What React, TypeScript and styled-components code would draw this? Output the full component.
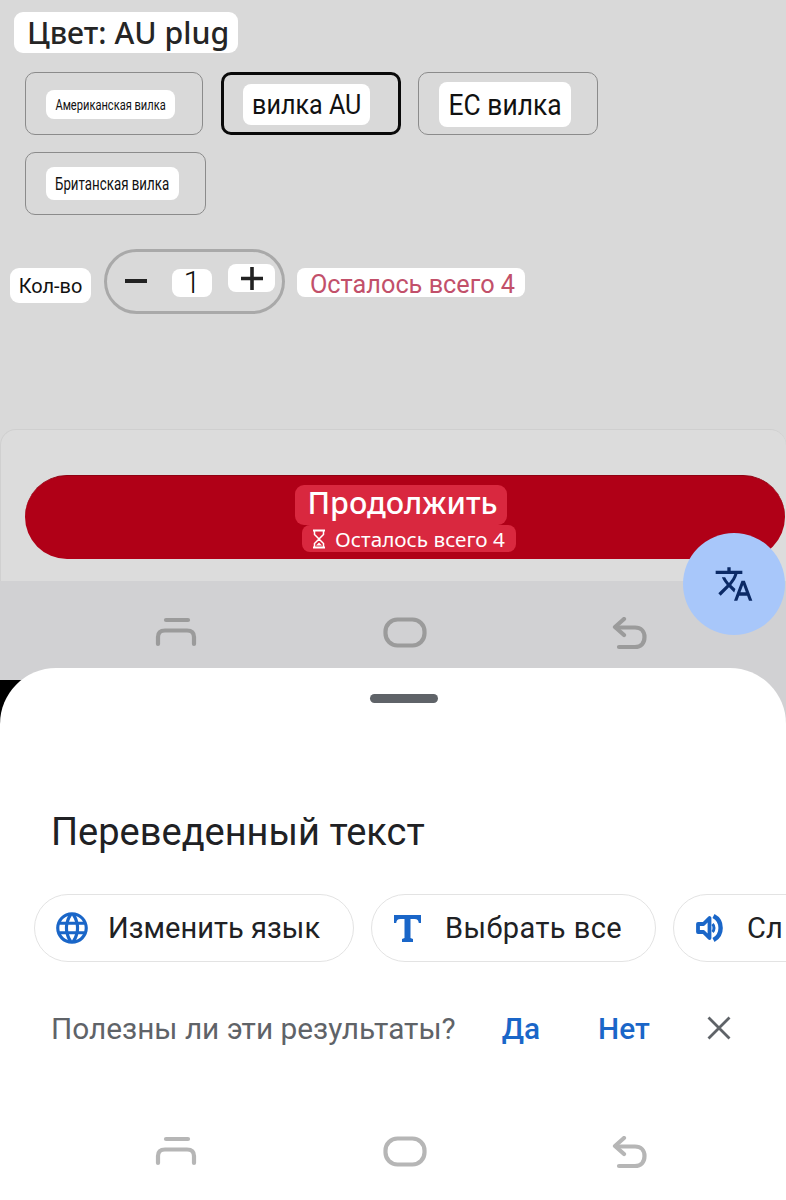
import styled, { createGlobalStyle } from 'styled-components';

const GlobalStyle = createGlobalStyle`
	html, body {
		margin: 0;
		padding: 0;
		background: #ffffff;
	}
	body {
		font-family: 'Roboto', 'Liberation Sans', sans-serif;
	}
`;

const Page = styled.div`
	position: relative;
	display: flex;
	flex-direction: column;
	width: 786px;
	height: 1200px;
	overflow: hidden;
	background: #ffffff;
`;

const Content = styled.section`
	display: flex;
	flex-direction: column;
	height: 429px;
	box-sizing: border-box;
	padding-top: 12px;
	background: #d9d9d9;
`;

const TitleChip = styled.h2`
	align-self: flex-start;
	margin: 0 0 19px 14px;
	padding: 0 9px 0 13px;
	height: 41px;
	line-height: 41px;
	background: #fff;
	border-radius: 9px;
	font-family: 'Noto Sans', sans-serif;
	font-size: 30.3px;
	font-weight: 500;
	color: #252525;
	white-space: nowrap;
`;

const Options = styled.div`
	display: flex;
	flex-wrap: wrap;
	gap: 17px;
	width: 600px;
	margin-left: 25px;
`;

const Option = styled.div<{ $w: number; $selected?: boolean }>`
	display: flex;
	align-items: center;
	justify-content: flex-start;
	box-sizing: border-box;
	width: ${p => p.$w}px;
	height: 63px;
	margin-left: ${p => (p.$selected ? 1 : 0)}px;
	padding-left: ${p => (p.$selected ? 19 : 20)}px;
	border: ${p => (p.$selected ? '3px solid #0a0a0a' : '1px solid #8b8b8b')};
	border-radius: 10px;
`;

const OptionChip = styled.span<{ $size: number; $h: number; $w: number; $top?: number }>`
	display: flex;
	align-items: center;
	justify-content: center;
	box-sizing: border-box;
	width: ${p => p.$w}px;
	height: ${p => p.$h}px;
	margin-top: ${p => p.$top ?? 0}px;
	background: #fff;
	border-radius: 8px;
	font-size: ${p => p.$size}px;
	color: #111;
	white-space: nowrap;
`;

const Squeezed = styled.span<{ $x: number }>`
	display: inline-block;
	transform: scaleX(${p => p.$x});
`;

const QtyRow = styled.div`
	display: flex;
	align-items: center;
	margin: 34px 0 0 10px;
`;

const QtyLabel = styled.span`
	display: flex;
	align-items: center;
	justify-content: center;
	width: 81px;
	height: 35px;
	margin-top: 8px;
	background: #fff;
	border-radius: 9px;
	font-size: 21px;
	color: #111;
`;

const Stepper = styled.div`
	display: flex;
	align-items: center;
	box-sizing: border-box;
	width: 181px;
	height: 65px;
	margin-left: 13px;
	padding-left: 18px;
	border: 3px solid #a9a9a9;
	border-radius: 33px;
`;

const MinusBar = styled.span`
	display: block;
	width: 22px;
	height: 4px;
	margin-top: -1px;
	background: #222;
`;

const CountChip = styled.span`
	display: flex;
	align-items: center;
	justify-content: center;
	width: 40px;
	height: 28px;
	margin: 2px 0 0 25px;
	background: #fff;
	border-radius: 8px;
	font-size: 31px;
	font-weight: 300;
	color: #111;
`;

const PlusChip = styled.span`
	display: flex;
	align-items: center;
	justify-content: center;
	width: 47px;
	height: 28px;
	margin: -7px 0 0 16px;
	background: #fff;
	border-radius: 8px;
`;

const StockChip = styled.span`
	display: flex;
	align-items: center;
	justify-content: center;
	box-sizing: border-box;
	width: 228px;
	height: 29px;
	margin: 2px 0 0 12px;
	padding: 3px 0 0 3px;
	background: #fff;
	border-radius: 8px;
	font-size: 25.3px;
	color: #c2506a;
	white-space: nowrap;
`;

const BuyWrap = styled.div`
	background: #d9d9d9;
`;

const BuyCard = styled.section`
	display: flex;
	box-sizing: border-box;
	height: 152px;
	padding: 45px 1px 0 25px;
	background: #dcdcdc;
	border-top: 1px solid #cfcfcf;
	border-left: 1px solid #d0d0d0;
	border-radius: 16px 16px 0 0;
`;

const BuyButton = styled.div`
	display: flex;
	flex-direction: column;
	align-items: center;
	box-sizing: border-box;
	width: 760px;
	height: 84px;
	margin-left: -1px;
	padding-top: 9px;
	background: #b00017;
	border-top: 1px solid #8f0012;
	border-radius: 42px;
`;

const BuyTitle = styled.span`
	display: flex;
	align-items: center;
	justify-content: center;
	box-sizing: border-box;
	width: 212px;
	height: 40px;
	margin-left: -9px;
	padding: 0 0 7px 4px;
	background: #d9283f;
	border-radius: 9px;
	font-family: 'Noto Sans', sans-serif;
	font-size: 30.5px;
	font-weight: 500;
	color: #fff;
`;

const BuySub = styled.span`
	display: flex;
	align-items: center;
	justify-content: center;
	gap: 9px;
	width: 214px;
	height: 27px;
	margin-left: 7px;
	background: #d9283f;
	border-radius: 8px;
	font-family: 'Noto Sans', sans-serif;
	font-size: 20.7px;
	color: #fff;
	white-space: nowrap;
`;

const NavBar = styled.nav<{ $light?: boolean }>`
	position: relative;
	display: flex;
	justify-content: space-between;
	align-items: flex-start;
	box-sizing: border-box;
	padding: ${p => (p.$light ? '0' : '36px')} 138px 0 155px;
	height: ${p => (p.$light ? '46px' : '149px')};
	background: ${p => (p.$light ? '#fff' : '#d1d1d3')};
	color: ${p => (p.$light ? '#b6b6b6' : '#9b9b9b')};
`;

const BlackCorner = styled.div`
	position: absolute;
	left: 0;
	top: 99px;
	width: 60px;
	height: 50px;
	background: #000;
`;

const Fab = styled.div`
	position: absolute;
	left: 683px;
	top: 533px;
	z-index: 3;
	display: flex;
	align-items: center;
	justify-content: center;
	width: 102px;
	height: 102px;
	border-radius: 50%;
	background: #a8c7fa;
	color: #0b2a66;
`;

const Sheet = styled.section`
	position: relative;
	z-index: 2;
	flex: 1;
	display: flex;
	flex-direction: column;
	margin-top: -62px;
	background: #fff;
	border-radius: 56px 56px 0 0;
`;

const Handle = styled.div`
	align-self: center;
	width: 68px;
	height: 9px;
	margin-top: 26px;
	margin-left: 21px;
	background: #5f6368;
	border-radius: 5px;
`;

const SheetTitle = styled.h1`
	margin: 109px 0 0 51px;
	height: 40px;
	line-height: 40px;
	font-size: 38px;
	font-weight: 400;
	color: #202124;
	white-space: nowrap;
`;

const ActionRow = styled.div`
	display: flex;
	gap: 17px;
	margin: 42px 0 0 34px;
	width: 752px;
	overflow: hidden;
`;

const ActionChip = styled.div<{ $w: number; $pad: number; $gap: number; $ls: number }>`
	flex: none;
	display: flex;
	align-items: center;
	gap: ${p => p.$gap}px;
	box-sizing: border-box;
	width: ${p => p.$w}px;
	height: 68px;
	padding-left: ${p => p.$pad}px;
	border: 1px solid #e3e3e3;
	border-radius: 34px;
	font-size: 29px;
	letter-spacing: ${p => p.$ls}px;
	color: #202124;
	white-space: nowrap;
`;

const FeedbackRow = styled.div`
	display: flex;
	align-items: center;
	height: 40px;
	margin: 46px 0 0 51px;
	font-size: 29.8px;
	color: #5f6368;
	white-space: nowrap;
`;

const FeedbackLink = styled.span<{ $left: number }>`
	margin-left: ${p => p.$left}px;
	color: #1a66c8;
	font-weight: 500;
`;

const CloseIcon = styled.svg`
	margin-left: 57px;
	color: #5f6368;
`;

const BottomSpacer = styled.div`
	height: 88px;
`;

const RecentsIcon = () => (
	<svg width="42" height="30" viewBox="0 0 42 30" fill="none" stroke="currentColor" strokeLinecap="round" strokeWidth="4.2">
		<path d="M11 3H33" />
		<path d="M3 27V20C3 15 6 13.5 10 13.5H32C36 13.5 39 15 39 20V27" />
	</svg>
);

const HomeIcon = () => (
	<svg width="44" height="31" viewBox="0 0 44 31" fill="none" stroke="currentColor" strokeWidth="4.2">
		<rect x="2.5" y="2.5" width="39" height="26" rx="12" />
	</svg>
);

const BackIcon = () => (
	<svg width="36" height="33" viewBox="0 0 36 33" fill="none" stroke="currentColor" strokeLinecap="round" strokeLinejoin="round" strokeWidth="4.2">
		<path d="M12 2L3 10L12 18" />
		<path d="M4 10.5H23C29 10.5 32.5 14.5 32.5 20C32.5 26 29 30 23 30H7" />
	</svg>
);

const NavIcons = () => (
	<>
		<RecentsIcon />
		<HomeIcon />
		<BackIcon />
	</>
);

const Hourglass = () => (
	<svg width="14" height="20" viewBox="0 0 14 20" fill="none" stroke="#fff" strokeWidth="1.5">
		<path d="M1 1.5H13M1 18.5H13" strokeWidth="2" />
		<path d="M2.5 2V5.5L7 10L2.5 14.5V18M11.5 2V5.5L7 10L11.5 14.5V18" />
		<path d="M4 16.5L7 13.5L10 16.5Z" fill="#fff" stroke="none" />
	</svg>
);

const TranslateIcon = () => (
	<svg width="40" height="40" viewBox="0 0 24 24" fill="currentColor">
		<path d="M12.87 15.07l-2.54-2.51.03-.03c1.74-1.94 2.98-4.17 3.71-6.53H17V4h-7V2H8v2H1v1.99h11.17C11.5 7.92 10.44 9.75 9 11.35 8.07 10.32 7.3 9.19 6.69 8h-2c.73 1.63 1.73 3.17 2.98 4.56l-5.09 5.02L4 19l5-5 3.11 3.11.76-2.04zM18.5 10h-2L12 22h2l1.12-3h4.75L21 22h2l-4.5-12zm-2.62 7l1.62-4.33L19.12 17h-3.24z" />
	</svg>
);

const GlobeIcon = () => (
	<svg width="38" height="38" viewBox="0 0 24 24" fill="#1a66c8">
		<path d="M11.99 2C6.47 2 2 6.48 2 12s4.47 10 9.99 10C17.52 22 22 17.52 22 12S17.52 2 11.99 2zm6.93 6h-2.95c-.32-1.25-.78-2.45-1.38-3.56 1.84.63 3.37 1.91 4.33 3.56zM12 4.04c.83 1.2 1.48 2.53 1.91 3.96h-3.82c.43-1.43 1.08-2.76 1.91-3.96zM4.26 14C4.1 13.36 4 12.69 4 12s.1-1.36.26-2h3.38c-.08.66-.14 1.32-.14 2 0 .68.06 1.34.14 2H4.26zm.82 2h2.95c.32 1.25.78 2.45 1.38 3.56-1.84-.63-3.37-1.9-4.33-3.56zm2.95-8H5.08c.96-1.66 2.49-2.93 4.33-3.56C8.81 5.55 8.35 6.75 8.03 8zM12 19.96c-.83-1.2-1.48-2.53-1.91-3.96h3.82c-.43 1.43-1.08 2.76-1.91 3.96zM14.34 14H9.66c-.09-.66-.16-1.32-.16-2 0-.68.07-1.35.16-2h4.68c.09.65.16 1.32.16 2 0 .68-.07 1.34-.16 2zm.25 5.56c.6-1.11 1.06-2.31 1.38-3.56h2.95c-.96 1.65-2.49 2.93-4.33 3.56zM16.36 14c.08-.66.14-1.32.14-2 0-.68-.06-1.34-.14-2h3.38c.16.64.26 1.31.26 2s-.1 1.36-.26 2h-3.38z" />
	</svg>
);

const SerifTIcon = () => (
	<svg width="27" height="27" viewBox="0 0 27 27" fill="#1a66c8">
		<path d="M0 0H27V8L24.8 8C24.4 5.5 23.5 4 20.5 4H16.5V23L19 24V27H8V24L10.5 23V4H6.5C3.5 4 2.6 5.5 2.2 8H0Z" />
	</svg>
);

const SpeakerIcon = () => (
	<svg width="28" height="28" viewBox="0 0 28 28" fill="none" stroke="#1a66c8">
		<path d="M2 10H7.5L13.5 4V24L7.5 18H2Z" strokeWidth="3.8" strokeLinejoin="round" />
		<path d="M17.5 2C27 7 27 21 17.5 26" strokeWidth="4.4" />
		<path d="M16.5 10C18.5 12 18.5 16 16.5 18" strokeWidth="3" />
	</svg>
);

export default function App() {
	return (
		<Page>
			<GlobalStyle />
			<Content>
				<TitleChip>Цвет: AU plug</TitleChip>
				<Options>
					<Option $w={178}>
						<OptionChip $w={129} $h={29} $size={15} $top={2}>
							<Squeezed $x={0.74}>Американская вилка</Squeezed>
						</OptionChip>
					</Option>
					<Option $w={180} $selected>
						<OptionChip $w={127} $h={41} $size={27} $top={2}>
							<Squeezed $x={0.93}>вилка AU</Squeezed>
						</OptionChip>
					</Option>
					<Option $w={180}>
						<OptionChip $w={132} $h={45} $size={29} $top={2}>
							<Squeezed $x={0.91}>ЕС вилка</Squeezed>
						</OptionChip>
					</Option>
					<Option $w={181}>
						<OptionChip $w={133} $h={33} $size={17.5}>
							<Squeezed $x={0.76}>Британская вилка</Squeezed>
						</OptionChip>
					</Option>
				</Options>
				<QtyRow>
					<QtyLabel>
						<Squeezed $x={0.95}>Кол-во</Squeezed>
					</QtyLabel>
					<Stepper>
						<MinusBar />
						<CountChip>1</CountChip>
						<PlusChip>
							<svg width="22" height="23" viewBox="0 0 22 23" stroke="#222" strokeWidth="3.6">
								<path d="M0 11.5H22M11 0V23" />
							</svg>
						</PlusChip>
					</Stepper>
					<StockChip>Осталось всего 4</StockChip>
				</QtyRow>
			</Content>
			<BuyWrap>
				<BuyCard>
					<BuyButton>
						<BuyTitle>Продолжить</BuyTitle>
						<BuySub>
							<Hourglass />
							Осталось всего 4
						</BuySub>
					</BuyButton>
				</BuyCard>
			</BuyWrap>
			<NavBar>
				<NavIcons />
				<BlackCorner />
			</NavBar>
			<Fab>
				<TranslateIcon />
			</Fab>
			<Sheet>
				<Handle />
				<SheetTitle>Переведенный текст</SheetTitle>
				<ActionRow>
					<ActionChip $w={320} $pad={18} $gap={17} $ls={0.05}>
						<GlobeIcon />
						Изменить язык
					</ActionChip>
					<ActionChip $w={285} $pad={22} $gap={24} $ls={0.45}>
						<SerifTIcon />
						Выбрать все
					</ActionChip>
					<ActionChip $w={200} $pad={22} $gap={23} $ls={0.2}>
						<SpeakerIcon />
						Сл
					</ActionChip>
				</ActionRow>
				<FeedbackRow>
					Полезны ли эти результаты?
					<FeedbackLink $left={46}>Да</FeedbackLink>
					<FeedbackLink $left={58}>Нет</FeedbackLink>
					<CloseIcon width="24" height="24" viewBox="0 0 24 24" stroke="currentColor" strokeWidth="2.8">
						<path d="M1.5 1.5L22.5 22.5M22.5 1.5L1.5 22.5" />
					</CloseIcon>
				</FeedbackRow>
				<BottomSpacer />
				<NavBar $light>
					<NavIcons />
				</NavBar>
			</Sheet>
		</Page>
	);
}
